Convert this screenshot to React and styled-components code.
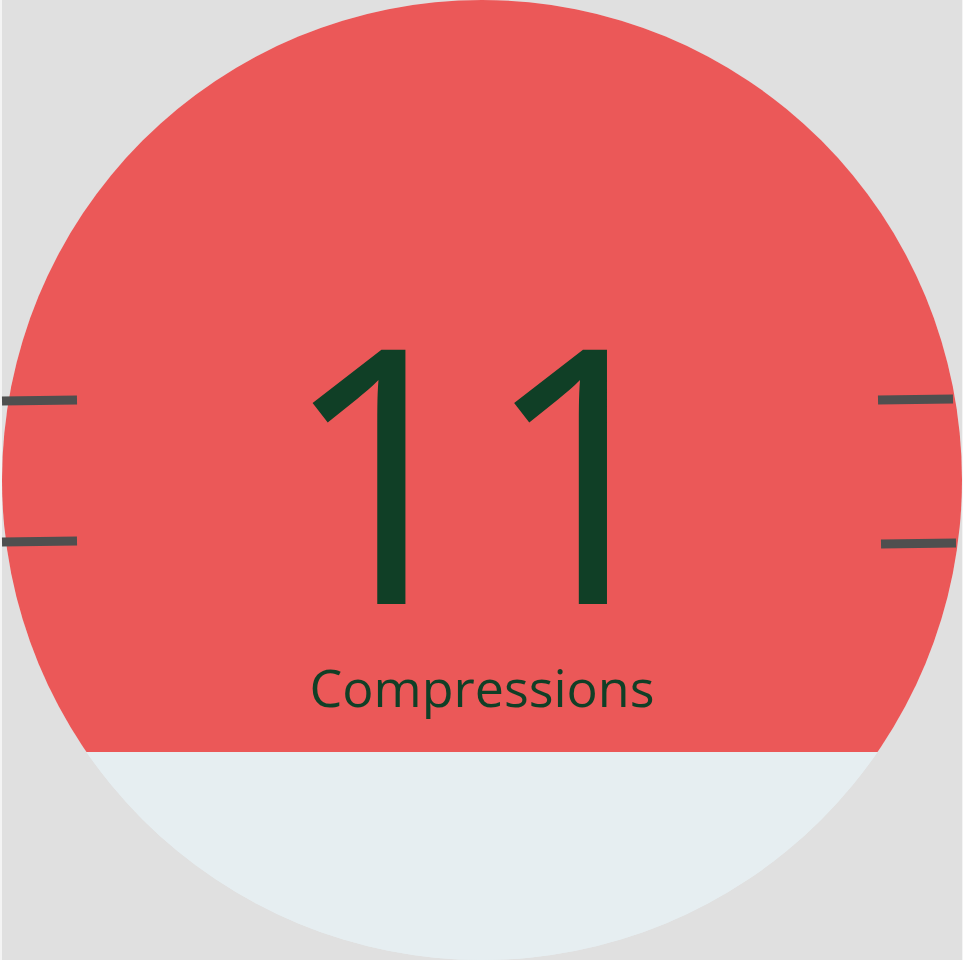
import React from "react";
import { styled, createGlobalStyle } from "styled-components";

const ticks = [
  { left: 0, top: 396 },
  { left: 0, top: 537 },
  { left: 876, top: 395 },
  { left: 879, top: 539 },
];

const App = () => {
  return (
    <>
      <GlobalStyle />
      <Stage>
        <Dial>
          <Filled>
            <Count>11</Count>
            <Label>Compressions</Label>
          </Filled>
          <Empty />
        </Dial>
        {ticks.map((t, i) => (
          <Tick key={i} $left={t.left} $top={t.top} />
        ))}
      </Stage>
    </>
  );
};

const GlobalStyle = createGlobalStyle`
body{
    margin: 0;
    background: #f4f4f4;
    font-family: "Open Sans", "Noto Sans", sans-serif;
}
`;

const Stage = styled.div`
position: relative;
width: 960px;
height: 960px;
margin-left: 2px;
background: #e0e0e0;
`;

const Dial = styled.div`
width: 960px;
height: 960px;
border-radius: 50%;
overflow: hidden;
display: flex;
flex-direction: column;
background: #e6eef1;
`;

const Filled = styled.div`
height: 752px;
flex-shrink: 0;
background: #eb5858;
display: flex;
flex-direction: column;
align-items: center;
padding-top: 288px;
box-sizing: border-box;
`;

const Empty = styled.div`
flex: 1;
background: #e6eef1;
`;

const Count = styled.div`
font-size: 356px;
line-height: 1;
letter-spacing: -2px;
color: #103f26;
`;

const Label = styled.div`
margin-top: 17px;
font-size: 52px;
line-height: 1;
color: #103f26;
`;

const Tick = styled.div`
position: absolute;
left: ${(p) => p.$left}px;
top: ${(p) => p.$top}px;
width: 75px;
height: 9px;
background: #4f4f4f;
transform: rotate(-0.9deg);
`;

export default App;
